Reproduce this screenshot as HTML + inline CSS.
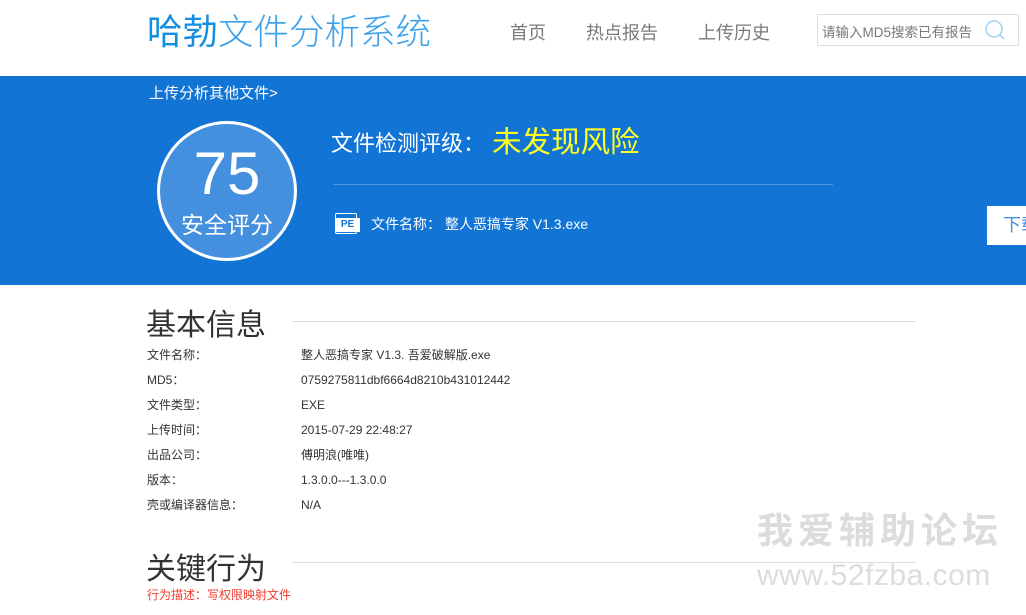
<!DOCTYPE html>
<html><head><meta charset="utf-8"><style>
*{margin:0;padding:0;box-sizing:border-box}
body{width:1026px;height:615px;overflow:hidden;background:#fff;font-family:"Liberation Sans","Noto Sans CJK SC",sans-serif;position:relative}
.a{position:absolute;white-space:nowrap}
</style></head><body>
<div class="a" style="left:147px;top:8px;font-size:35.5px;line-height:48px;color:#3da2ea;font-weight:300"><span style="color:#168ee0;font-weight:400">哈勃</span>文件分析系统</div>
<div class="a" style="left:510px;top:19px;font-size:18px;color:#7a7a7a">首页</div>
<div class="a" style="left:586px;top:19px;font-size:18px;color:#7a7a7a">热点报告</div>
<div class="a" style="left:698px;top:19px;font-size:18px;color:#7a7a7a">上传历史</div>
<div class="a" style="left:817px;top:14px;width:202px;height:32px;border:1px solid #ddd"></div>
<div class="a" style="left:822px;top:21px;font-size:13.5px;color:#777">请输入MD5搜索已有报告</div>
<svg class="a" style="left:984px;top:18px" width="24" height="24"><circle cx="10" cy="11" r="8" fill="none" stroke="#9fd0f2" stroke-width="1.5"/><line x1="16" y1="17" x2="20" y2="21" stroke="#9fd0f2" stroke-width="1.5"/></svg>
<div class="a" style="left:0;top:76px;width:1026px;height:209px;background:#1275d5"></div>
<div class="a" style="left:149px;top:82px;font-size:15px;color:#fff">上传分析其他文件&gt;</div>
<div class="a" style="left:157px;top:121px;width:140px;height:140px;border-radius:50%;background:#4490de;border:3px solid #fff"></div>
<div class="a" style="left:157px;top:139px;width:140px;text-align:center;font-size:60px;line-height:70px;color:#fff">75</div>
<div class="a" style="left:157px;top:206px;width:140px;text-align:center;font-size:23px;color:#fff">安全评分</div>
<div class="a" style="left:331px;top:126px;font-size:22px;color:#fff">文件检测评级：</div>
<div class="a" style="left:492px;top:119px;font-size:29.5px;color:#ffff22">未发现风险</div>
<div class="a" style="left:333px;top:184px;width:500px;height:1px;background:#4d97e0"></div>
<div class="a" style="left:335px;top:213px;width:22px;height:21px;border:1px solid #fff;border-radius:2px"></div>
<div class="a" style="left:335px;top:218px;width:25px;height:14px;background:#fff;color:#1275d5;font-size:10px;font-weight:bold;line-height:14px;text-align:center">PE</div>
<div class="a" style="left:371px;top:214px;font-size:14px;color:#fff">文件名称： 整人恶搞专家 V1.3.exe</div>
<div class="a" style="left:987px;top:206px;width:50px;height:39px;background:#fff;color:#4a8ee0;font-size:18px;line-height:39px;padding-left:16px">下载</div>
<div class="a" style="left:146px;top:300px;font-size:30px;color:#333">基本信息</div>
<div class="a" style="left:292px;top:321px;width:624px;height:1px;background:#ddd"></div>
<div class="a" style="left:147px;top:343px;font-size:12px;line-height:25px;color:#333">文件名称：<br>MD5：<br>文件类型：<br>上传时间：<br>出品公司：<br>版本：<br>壳或编译器信息：</div>
<div class="a" style="left:301px;top:343px;font-size:12px;line-height:25px;color:#333">整人恶搞专家 V1.3. 吾爱破解版.exe<br>0759275811dbf6664d8210b431012442<br>EXE<br>2015-07-29 22:48:27<br>傅明浪(唯唯)<br>1.3.0.0---1.3.0.0<br>N/A</div>
<div class="a" style="left:146px;top:544px;font-size:30px;color:#333">关键行为</div>
<div class="a" style="left:292px;top:562px;width:624px;height:1px;background:#ddd"></div>
<div class="a" style="left:147px;top:586px;font-size:12px;color:#f03c2c">行为描述：写权限映射文件</div>
<div class="a" style="left:757px;top:502px;font-size:36px;font-weight:bold;color:#dcdcdc;letter-spacing:5px">我爱辅助论坛</div>
<div class="a" style="left:757px;top:559px;font-size:30px;color:#dcdcdc;letter-spacing:0.5px">www.52fzba.com</div>
</body></html>
